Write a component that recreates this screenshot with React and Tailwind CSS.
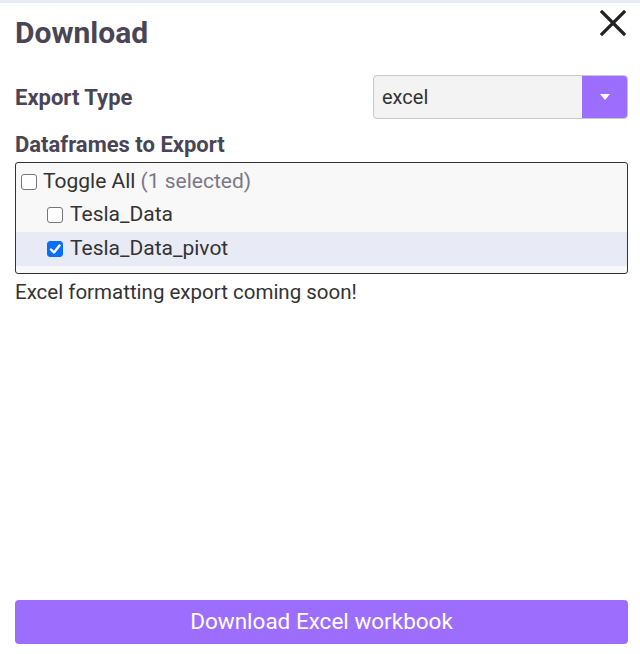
import { useState } from 'react';

const Box = ({ checked }) => (
  <span
    className={`flex h-[16px] w-[16px] shrink-0 items-center justify-center rounded-[3px] border ${
      checked ? 'border-[#0b6ef7] bg-[#0b6ef7]' : 'border-[#767676] bg-white'
    }`}
  >
    {checked && (
      <svg width="12" height="12" viewBox="0 0 12 12">
        <path d="M2 6.5 L5 9.5 L10.5 2.5" fill="none" stroke="white" strokeWidth="2.4" strokeLinecap="round" strokeLinejoin="round" />
      </svg>
    )}
  </span>
);

const App = () => {
  const [selected, setSelected] = useState({ Tesla_Data: false, Tesla_Data_pivot: true });
  const count = Object.values(selected).filter(Boolean).length;

  return (
    <div className="flex h-[654px] w-[640px] flex-col bg-white font-['Roboto',sans-serif] text-[#333]">
      {/* top strip */}
      <div className="h-[3px] bg-[#e8eaf6]"></div>

      <div className="flex flex-1 flex-col pl-[15px] pr-[12px]">
        {/* Header */}
        <div className="flex h-[58px] items-center justify-between">
          <h1 className="text-[30px] font-bold text-[#494556]">Download</h1>
          <button className="-mt-[18px] mr-[2px] text-[#222]">
            <svg width="26" height="26" viewBox="0 0 26 26">
              <path d="M2 2 L24 24 M24 2 L2 24" stroke="currentColor" strokeWidth="3.2" strokeLinecap="square" />
            </svg>
          </button>
        </div>

        {/* Export type */}
        <div className="mt-[14px] flex items-center justify-between">
          <span className="text-[22px] font-bold text-[#494556]">Export Type</span>
          <div className="flex h-[44px] w-[255px] overflow-hidden rounded-[4px] border border-[#c8c8c8] bg-[#f3f3f3]">
            <div className="flex flex-1 items-center pl-[8px] text-[20px] text-[#333]">excel</div>
            <div className="flex w-[45px] items-center justify-center bg-[#9d6efd]">
              <svg width="10" height="6" viewBox="0 0 10 6">
                <path d="M0 0 L10 0 L5 6 Z" fill="white" />
              </svg>
            </div>
          </div>
        </div>

        {/* Dataframes */}
        <div className="mt-[12px] text-[22px] font-bold leading-[28px] text-[#494556]">Dataframes to Export</div>
        <div className="mt-[3px] rounded-[3px] border border-[#333] bg-[#f8f8f8] pt-[2px] pb-[7px]">
          <label className="flex h-[33px] items-center pl-[5px] text-[21px]">
            <Box checked={false} />
            <span className="ml-[6px]">Toggle All</span>
            <span className="ml-[5px] text-[#7c7787]">({count} selected)</span>
          </label>
          {Object.keys(selected).map((name) => (
            <label
              key={name}
              onClick={() => setSelected({ ...selected, [name]: !selected[name] })}
              className={`flex h-[34px] items-center pl-[31px] text-[21px] ${selected[name] ? 'bg-[#e8eaf6]' : ''}`}
            >
              <Box checked={selected[name]} />
              <span className="ml-[7px]">{name}</span>
            </label>
          ))}
        </div>

        <p className="mt-[3px] text-[20.5px] text-[#333]">Excel formatting export coming soon!</p>

        <div className="flex-1"></div>

        <button className="mb-[10px] h-[44px] w-full rounded-[4px] bg-[#9d6efd] text-[22.5px] text-white">
          Download Excel workbook
        </button>
      </div>
    </div>
  );
};

export default App;
